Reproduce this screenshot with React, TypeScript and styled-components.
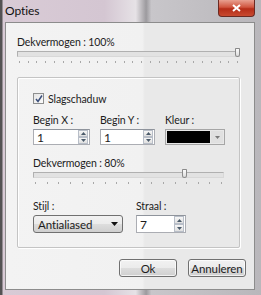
import styled, { createGlobalStyle } from 'styled-components'

const GlobalStyle = createGlobalStyle`
  html, body {
    margin: 0;
    padding: 0;
    background: #3c3c3c;
  }
  body {
    font-family: Lato, 'Open Sans', sans-serif;
    font-size: 10.5px;
    letter-spacing: -0.1px;
    color: #1c1c1c;
  }
`

const Slider = ({ width, value, ticks }: { width: number; value: number; ticks: number }) => (
  <StyledSlider $width={width}>
    <StyledTrack>
      <StyledThumb style={{ left: `${(value / 100) * (width - 6)}px` }} />
    </StyledTrack>
    <StyledTicks>
      {Array.from({ length: ticks }).map((_, i) => (
        <StyledTick key={i} />
      ))}
    </StyledTicks>
  </StyledSlider>
)

const SpinArrows = () => (
  <StyledSpinArrows>
    <StyledArrowBtn>
      <svg width='5' height='3' viewBox='0 0 5 3'>
        <path d='M0 3 L2.5 0 L5 3 Z' fill='#4a5a6a' />
      </svg>
    </StyledArrowBtn>
    <StyledArrowBtn>
      <svg width='5' height='3' viewBox='0 0 5 3'>
        <path d='M0 0 L2.5 3 L5 0 Z' fill='#4a5a6a' />
      </svg>
    </StyledArrowBtn>
  </StyledSpinArrows>
)

const Spinner = ({ value, width, height }: { value: string; width: number; height: number }) => (
  <StyledSpinner $width={width} $height={height}>
    <span>{value}</span>
    <SpinArrows />
  </StyledSpinner>
)

const App = () => {
  return (
    <>
      <GlobalStyle />
      <StyledWindow>
        <StyledTitleBar>
          <StyledTitle>Opties</StyledTitle>
          <StyledClose>
            <svg width='9' height='8' viewBox='0 0 9 8'>
              <path d='M1 1 L8 7 M8 1 L1 7' stroke='#fff' strokeWidth='2' />
            </svg>
          </StyledClose>
        </StyledTitleBar>

        <StyledClient>
          <StyledLabel>Dekvermogen : 100%</StyledLabel>
          <Slider width={223} value={100} ticks={26} />

          <StyledGroup>
            <StyledCheckRow>
              <StyledCheckbox>
                <svg width='8' height='8' viewBox='0 0 8 8'>
                  <path d='M1 4 L3 6.5 L7 0.5' stroke='#3a4e7a' strokeWidth='1.5' fill='none' />
                </svg>
              </StyledCheckbox>
              <span>Slagschaduw</span>
            </StyledCheckRow>

            <StyledFieldRow>
              <StyledField $width={57}>
                <StyledLabel>Begin X :</StyledLabel>
                <Spinner value='1' width={57} height={16} />
              </StyledField>
              <StyledField $width={55}>
                <StyledLabel>Begin Y :</StyledLabel>
                <Spinner value='1' width={55} height={16} />
              </StyledField>
              <StyledField $width={60}>
                <StyledLabel>Kleur :</StyledLabel>
                <StyledColorBox>
                  <StyledSwatch />
                  <StyledColorDrop>
                    <svg width='5' height='3' viewBox='0 0 5 3'>
                      <path d='M0 0 L2.5 3 L5 0 Z' fill='#7a7a7a' />
                    </svg>
                  </StyledColorDrop>
                </StyledColorBox>
              </StyledField>
            </StyledFieldRow>

            <StyledInnerSlider>
              <StyledLabel>Dekvermogen : 80%</StyledLabel>
              <Slider width={191} value={80} ticks={17} />
            </StyledInnerSlider>

            <StyledBottomRow>
              <StyledField $width={90}>
                <StyledLabel>Stijl :</StyledLabel>
                <StyledCombo>
                  <span>Antialiased</span>
                  <svg width='7' height='4' viewBox='0 0 7 4'>
                    <path d='M0 0 L3.5 4 L7 0 Z' fill='#111' />
                  </svg>
                </StyledCombo>
              </StyledField>
              <StyledField $width={50}>
                <StyledLabel>Straal :</StyledLabel>
                <Spinner value='7' width={50} height={18} />
              </StyledField>
            </StyledBottomRow>
          </StyledGroup>

          <StyledFooter>
            <StyledButton>Ok</StyledButton>
            <StyledButton>Annuleren</StyledButton>
          </StyledFooter>
        </StyledClient>
      </StyledWindow>
    </>
  )
}

export default App

const StyledWindow = styled.div`
  width: 261px;
  height: 295px;
  box-sizing: border-box;
  display: flex;
  flex-direction: column;
  padding: 0 6px 5px 5px;
  background:
    linear-gradient(90deg, rgba(70, 70, 70, 0.9) 0, rgba(70, 70, 70, 0.9) 2px, transparent 3px),
    linear-gradient(90deg, #d9cbd6 0, #d4c6d2 40%, #e6e2e6 52%, #9c9a9e 56%, #c8c6ca 58%, #b9b7bb 100%);
  position: relative;
  overflow: hidden;
`
const StyledTitleBar = styled.div`
  height: 22px;
  display: flex;
  justify-content: space-between;
  align-items: flex-start;
`
const StyledTitle = styled.div`
  font-size: 12px;
  line-height: 12px;
  margin-top: 5px;
  color: #111;
`
const StyledClose = styled.div`
  width: 37px;
  height: 17px;
  box-sizing: border-box;
  border: 1px solid #6b2a22;
  border-top: none;
  border-radius: 0 0 4px 4px;
  background: linear-gradient(180deg, #e8a090 0, #d0553f 45%, #b52d18 55%, #c84a30 100%);
  display: flex;
  align-items: center;
  justify-content: center;
`
const StyledClient = styled.div`
  flex: 1;
  box-sizing: border-box;
  border: 1px solid #8c8c8c;
  background: linear-gradient(90deg, #f3f3f3 0, #f1f1f1 55%, #e9e9e9 56%, #e9e9e9 100%);
  padding: 13px 14px 0 11px;
  display: flex;
  flex-direction: column;
`
const StyledLabel = styled.div`
  line-height: 13px;
  height: 13px;
  white-space: nowrap;
`
const StyledSlider = styled.div<{ $width: number }>`
  width: ${({ $width }) => $width}px;
  margin-top: 2px;
  display: flex;
  flex-direction: column;
  gap: 4px;
`
const StyledTrack = styled.div`
  position: relative;
  height: 4px;
  border: 1px solid #b0b0b0;
  border-right-color: #d8d8d8;
  border-bottom-color: #d8d8d8;
  background: #e2e2e2;
`
const StyledThumb = styled.div`
  position: absolute;
  top: -4px;
  width: 5px;
  height: 9px;
  box-sizing: border-box;
  border: 1px solid #8a8a8a;
  border-radius: 1px 1px 3px 3px;
  background: linear-gradient(180deg, #fbfbfb, #dcdcdc);
`
const StyledTicks = styled.div`
  display: flex;
  justify-content: space-between;
  padding: 0 2px;
`
const StyledTick = styled.div`
  width: 1px;
  height: 2px;
  background: #a8a8a8;
`
const StyledGroup = styled.div`
  margin-top: 14px;
  width: 223px;
  height: 171px;
  box-sizing: border-box;
  border: 1px solid #c4c4c4;
  border-radius: 2px;
  box-shadow: inset 1px 1px 0 #fff, 1px 1px 0 #fff;
  padding: 14px 0 0 15px;
  display: flex;
  flex-direction: column;
`
const StyledCheckRow = styled.div`
  display: flex;
  align-items: center;
  gap: 4px;
  height: 13px;
`
const StyledCheckbox = styled.div`
  width: 11px;
  height: 11px;
  box-sizing: border-box;
  border: 1px solid #8e8f8f;
  background: linear-gradient(135deg, #e4e4e4, #fbfbfb);
  display: flex;
  align-items: center;
  justify-content: center;
`
const StyledFieldRow = styled.div`
  display: flex;
  gap: 10px;
  margin-top: 9px;
`
const StyledField = styled.div<{ $width: number }>`
  width: ${({ $width }) => $width}px;
  display: flex;
  flex-direction: column;
  gap: 2px;
`
const StyledSpinner = styled.div<{ $width: number; $height: number }>`
  width: ${({ $width }) => $width}px;
  height: ${({ $height }) => $height}px;
  box-sizing: border-box;
  border: 1px solid #abadb3;
  border-top-color: #8f949c;
  background: #fff;
  display: flex;
  align-items: center;
  justify-content: space-between;
  padding-left: 3px;
  font-size: 12px;
`
const StyledSpinArrows = styled.div`
  display: flex;
  flex-direction: column;
  height: 100%;
  width: 10px;
  margin-right: 1px;
`
const StyledArrowBtn = styled.div`
  flex: 1;
  border: 1px solid #b8bec8;
  background: linear-gradient(180deg, #f6f6f6, #e0e0e0);
  display: flex;
  align-items: center;
  justify-content: center;
`
const StyledColorBox = styled.div`
  width: 60px;
  height: 16px;
  box-sizing: border-box;
  border: 1px solid #a6a6a6;
  background: #e8e8e8;
  display: flex;
  padding: 1px;
  gap: 1px;
`
const StyledSwatch = styled.div`
  flex: 1;
  background: #000;
`
const StyledColorDrop = styled.div`
  width: 12px;
  display: flex;
  align-items: center;
  justify-content: center;
  background: #e0e0e0;
`
const StyledInnerSlider = styled.div`
  margin-top: 12px;
  display: flex;
  flex-direction: column;
`
const StyledBottomRow = styled.div`
  display: flex;
  gap: 13px;
  margin-top: 16px;
`
const StyledCombo = styled.div`
  width: 90px;
  height: 18px;
  box-sizing: border-box;
  border: 1px solid #707070;
  border-radius: 3px;
  background: linear-gradient(180deg, #f2f2f2 0, #ebebeb 50%, #dddddd 51%, #cfcfcf 100%);
  display: flex;
  align-items: center;
  justify-content: space-between;
  padding: 0 4px 0 4px;
  font-size: 11.5px;
`
const StyledFooter = styled.div`
  display: flex;
  justify-content: flex-end;
  gap: 11px;
  margin-top: 11px;
  width: 229px;
`
const StyledButton = styled.div`
  width: 58px;
  height: 18px;
  box-sizing: border-box;
  border: 1px solid #707070;
  border-radius: 3px;
  background: linear-gradient(180deg, #f2f2f2 0, #ebebeb 50%, #dddddd 51%, #cfcfcf 100%);
  box-shadow: inset 0 0 0 1px rgba(255, 255, 255, 0.7);
  display: flex;
  align-items: center;
  justify-content: center;
  font-size: 11.5px;
`
